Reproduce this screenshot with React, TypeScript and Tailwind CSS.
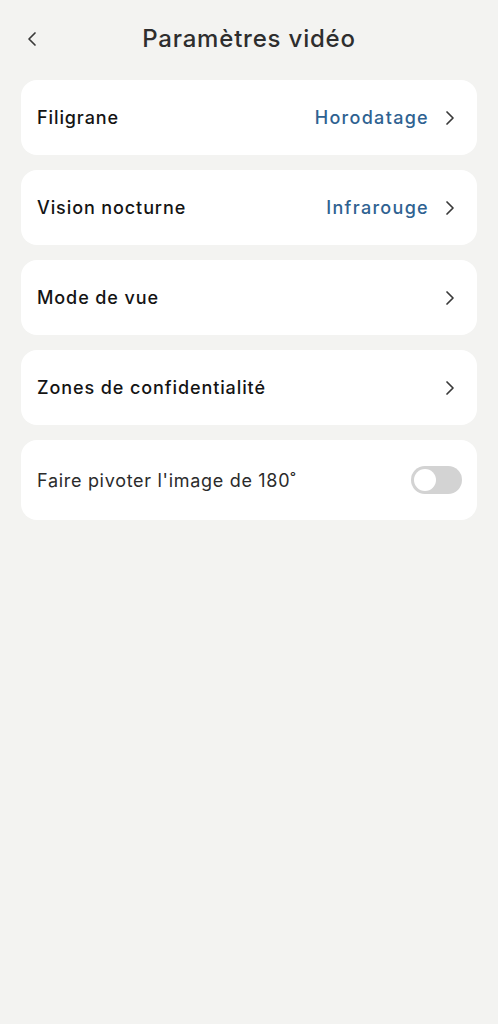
import React from "react";

type Row = { label: string; value?: string };

const rows: Row[] = [
    { label: "Filigrane", value: "Horodatage" },
    { label: "Vision nocturne", value: "Infrarouge" },
    { label: "Mode de vue" },
    { label: "Zones de confidentialité" },
];

function Chevron({ left }: { left?: boolean }) {
    return (
        <svg width="14" height="16" viewBox="0 0 14 16" fill="none">
            <path
                d={left ? "M10 2 L4 8 L10 14" : "M4 2 L10 8 L4 14"}
                stroke="#3a3a3a"
                strokeWidth="1.7"
                strokeLinecap="round"
                strokeLinejoin="round"
            />
        </svg>
    );
}

export default function App() {
    return (
        <div className="min-h-[1024px] w-full bg-[#f3f3f1] font-['Inter','Noto_Sans',sans-serif]">
            <div className="relative flex h-[80px] items-center justify-center">
                <div className="absolute left-[25px] top-[31px]">
                    <Chevron left />
                </div>
                <h1 className="-mt-[2px] text-[24px] font-medium tracking-[0.8px] text-[#2e2e2e]">
                    Paramètres vidéo
                </h1>
            </div>
            <div className="flex flex-col gap-[15px] px-[21px]">
                {rows.map((r, i) => (
                    <div
                        key={i}
                        className="flex h-[75px] items-center justify-between rounded-[16px] bg-white pl-[16px] pr-[20px]"
                    >
                        <span className="text-[18px] font-medium tracking-[0.9px] text-[#141414]">{r.label}</span>
                        <div className="flex items-center gap-[14px]">
                            {r.value && (
                                <span className="text-[18px] font-medium tracking-[1.3px] text-[#2f6291]">{r.value}</span>
                            )}
                            <Chevron />
                        </div>
                    </div>
                ))}
                <div className="flex h-[80px] items-center justify-between rounded-[16px] bg-white pl-[16px] pr-[15px]">
                    <span className="text-[18px] tracking-[0.7px] text-[#2b2b2b]">Faire pivoter l'image de 180˚</span>
                    <div className="flex h-[28px] w-[51px] items-center rounded-full bg-[#d3d3d3] px-[3px]">
                        <div className="h-[22px] w-[22px] rounded-full bg-white" />
                    </div>
                </div>
            </div>
        </div>
    );
}
